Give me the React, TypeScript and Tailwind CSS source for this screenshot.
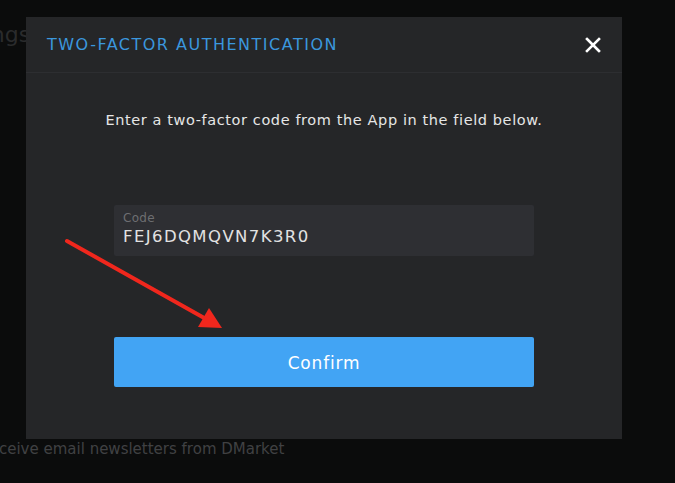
import React from "react";

const font = { fontFamily: '"DejaVu Sans", "Open Sans", sans-serif' };

export default function App() {
  return (
    <div className="relative w-[675px] h-[483px] overflow-hidden bg-[#0b0c0c]" style={font}>
      {/* page behind the overlay */}
      <div className="flex flex-col text-[#2a2b2c] -ml-[60px]">
        <div className="mt-[22px] text-[22px] leading-[26px]">Settings</div>
        <div className="mt-[212px] flex flex-col gap-[21px] text-[15px] leading-[22px]">
          <div className="-ml-[4px]">Telno</div>
          <div className="-ml-[6px]">Kind</div>
          <div className="-ml-[2px]">Lang</div>
          <div className="-ml-[2px]">1:06</div>
        </div>
        <div className="mt-[27px] ml-[40px] text-[15px] leading-[22px] text-[#404143]">
          Receive email newsletters from DMarket
        </div>
      </div>

      {/* modal */}
      <div className="absolute left-[26px] top-[17px] w-[596px] h-[422px] bg-[#252628] flex flex-col">
        <div className="h-[56px] shrink-0 flex items-center justify-between pl-[21px] pr-[21px] border-b border-[#2d2e31]">
          <span className="text-[16px] tracking-[1.5px] text-[#3b97dd]">TWO-FACTOR AUTHENTICATION</span>
          <svg width="16" height="16" viewBox="0 0 16 16" className="text-white">
            <path d="M2 2L14 14M14 2L2 14" stroke="currentColor" strokeWidth="2.6" strokeLinecap="square" />
          </svg>
        </div>
        <div className="flex flex-col items-center">
          <p className="mt-[37px] text-[14.5px] leading-[20px] tracking-[0.6px] text-[#e6e6e6]">
            Enter a two-factor code from the App in the field below.
          </p>
          <div className="mt-[75px] w-[420px] h-[51px] bg-[#2e2f33] rounded-[2px] px-[9px] pt-[6px] flex flex-col">
            <span className="text-[12px] leading-[15px] tracking-[0.3px] text-[#6d6e71]">Code</span>
            <span className="text-[16.5px] leading-[22px] tracking-[1.4px] text-[#e2e2e2]">FEJ6DQMQVN7K3R0</span>
          </div>
          <button className="mt-[81px] w-[420px] h-[50px] bg-[#42a4f4] rounded-[2px] text-white text-[17px] leading-[24px] tracking-[0.8px] pt-[2px]">
            Confirm
          </button>
        </div>
      </div>

      {/* red arrow annotation */}
      <svg className="absolute left-0 top-0" width="675" height="483" viewBox="0 0 675 483">
        <line x1="67" y1="241" x2="206" y2="319" stroke="#f0271d" strokeWidth="4" strokeLinecap="round" />
        <polygon points="222,328 198,327 209,308" fill="#f0271d" />
      </svg>
    </div>
  );
}
